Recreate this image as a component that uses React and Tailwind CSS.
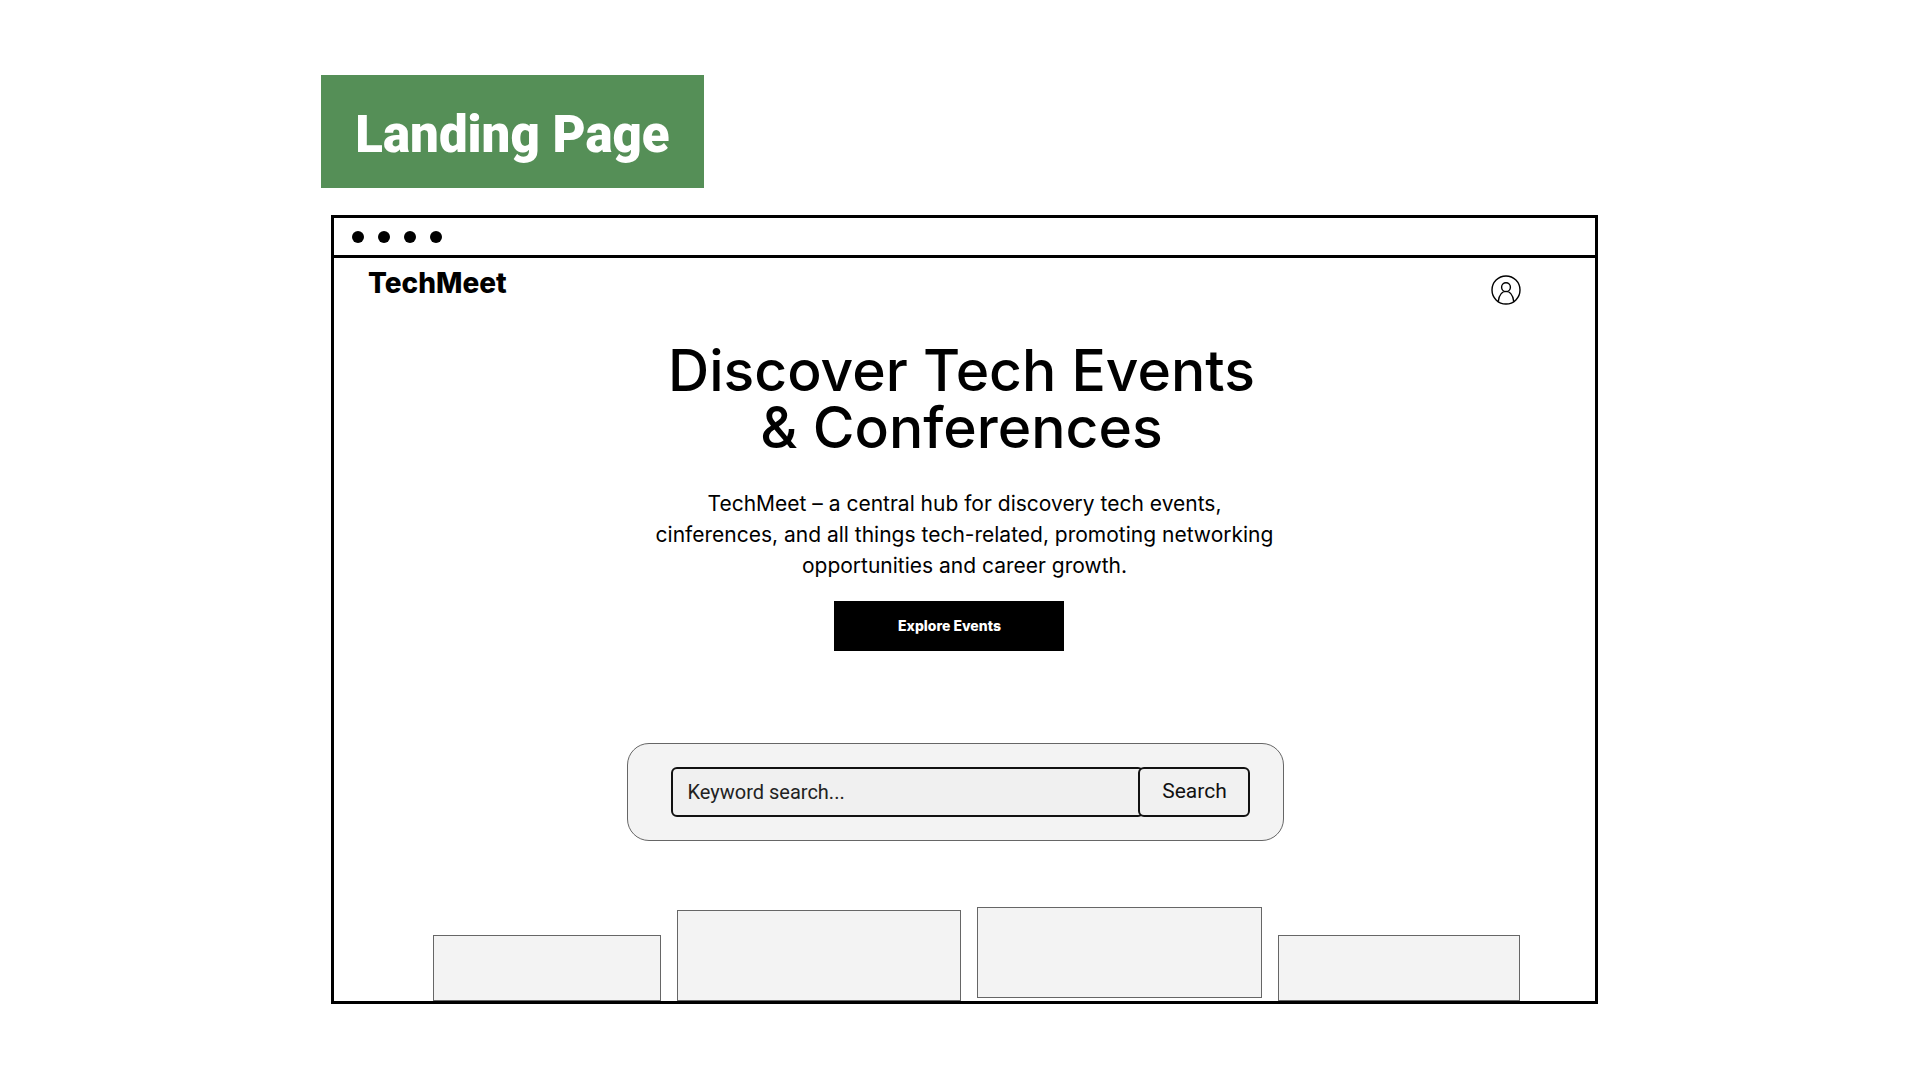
const cards = [
  { id: 'first', className: 'h-[66px]' },
  { id: 'second', className: 'h-[91px]' },
  { id: 'third', className: 'mb-[3px] h-[91px]' },
  { id: 'fourth', className: 'h-[66px]' },
];

function UserIcon() {
  return (
    <svg viewBox="0 0 30 30" className="size-[30px]" fill="none" stroke="black" strokeWidth="1.4" aria-hidden="true">
      <circle cx="15" cy="15" r="14" />
      <circle cx="15" cy="12.2" r="4.4" />
      <path d="M7.2 26.6C8 20.5 11 16.4 15 16.4s7 4.1 7.8 10.2" />
    </svg>
  );
}

function TitleBar() {
  return (
    <div className="flex h-[40px] items-center gap-[14px] border-b-[3px] border-black pl-[18px]">
      {[0, 1, 2, 3].map((dot) => (
        <span key={dot} className="size-3 rounded-full bg-black" />
      ))}
    </div>
  );
}

function SearchForm() {
  return (
    <form
      className="mt-[92px] mr-[17px] flex h-[98px] w-[657px] max-w-full items-center rounded-[22px] border border-[#666] bg-[#f3f3f3] pr-[33px] pl-[43px] font-[Roboto,sans-serif]"
      onSubmit={(e) => e.preventDefault()}
    >
      <input
        type="text"
        aria-label="Keyword search"
        placeholder="Keyword search..."
        className="-mr-1.5 h-[50px] min-w-0 flex-1 rounded-md border-2 border-[#111] bg-[#f0f0f0] px-3.5 text-[20px] text-[#222] placeholder:text-[#222]"
      />
      <button type="submit" className="relative h-[50px] w-28 rounded-md border-2 border-[#111] bg-[#f1f1f1] text-[21px] text-[#111]">
        Search
      </button>
    </form>
  );
}

export default function App() {
  return (
    <main className="min-h-screen bg-white pt-[75px] pb-[76px] text-black">
      <div className="mx-auto w-2/3">
        <h2 className="ml-px flex h-[113px] w-[383px] items-center justify-center bg-[#558f57] pt-2 font-[Roboto,sans-serif] text-[51px] font-black text-white">
          Landing Page
        </h2>
        <section className="mt-[27px] mr-[2px] ml-[11px] border-[3px] border-black">
          <TitleBar />
          <header className="flex items-start justify-between pr-[74px] pl-[34px]">
            <a href="#" className="mt-[9px] font-[Inter,sans-serif] text-[28px] leading-8 font-extrabold">
              TechMeet
            </a>
            <button type="button" aria-label="Account" className="mt-[17px]">
              <UserIcon />
            </button>
          </header>
          <div className="flex flex-col items-center">
            <h1 className="mt-[37px] mr-1.5 text-center font-[Inter,sans-serif] text-[57px] leading-[57px] font-medium">
              Discover Tech Events
              <br />
              &amp; Conferences
            </h1>
            <p className="mt-8 text-center font-[Inter,sans-serif] text-[21px] leading-[31px]">
              TechMeet – a central hub for discovery tech events,
              <br />
              cinferences, and all things tech-related, promoting networking
              <br />
              opportunities and career growth.
            </p>
            <button
              type="button"
              className="mt-5 mr-[30px] h-[50px] w-[230px] bg-black font-[Inter,sans-serif] text-sm font-extrabold text-white"
            >
              Explore Events
            </button>
            <SearchForm />
          </div>
          <div className="mt-[66px] grid grid-cols-[228fr_284fr_284fr_242fr] items-end gap-4 pr-[75px] pl-[99px]">
            {cards.map((card) => (
              <div key={card.id} className={`border border-[#666] bg-[#f3f3f3] ${card.className}`} />
            ))}
          </div>
        </section>
      </div>
    </main>
  );
}
